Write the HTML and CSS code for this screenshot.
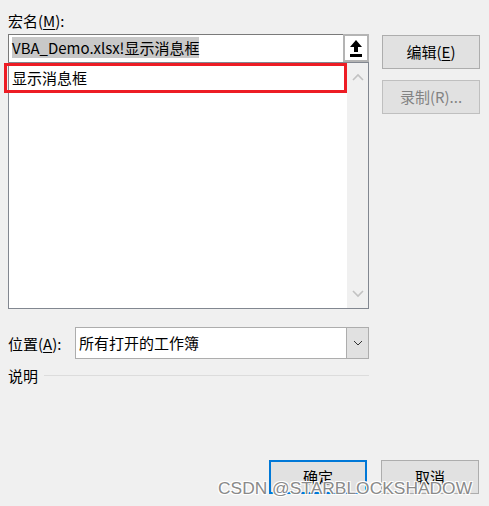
FILE: index.html
```html
<!DOCTYPE html>
<html lang="zh-CN">
<head>
<meta charset="utf-8">
<title>宏</title>
<link rel="stylesheet" href="styles.css">
</head>
<body>
<div class="dialog">
  <div class="top">
    <div class="left">
      <div class="label-macro">宏名(<u>M</u>):</div>
      <div class="name-row">
        <div class="name-box"><span class="sel">VBA_Demo.xlsx!显示消息框</span></div>
        <div class="up-btn">
          <svg width="12" height="17" viewBox="0 0 12 17"><path d="M6 0 L12 7 L8 7 L8 12 L4 12 L4 7 L0 7 Z" fill="#000"/><rect x="0" y="14" width="12" height="3" fill="#000"/></svg>
        </div>
      </div>
      <div class="list">
        <div class="list-items">
          <div class="item">显示消息框</div>
          <div class="mark"></div>
        </div>
        <div class="scroll">
          <svg width="12" height="8" viewBox="0 0 12 8"><path d="M1 7 L6 2 L11 7" fill="none" stroke="#c2c2c2" stroke-width="1.6"/></svg>
          <svg width="12" height="8" viewBox="0 0 12 8"><path d="M1 1 L6 6 L11 1" fill="none" stroke="#c2c2c2" stroke-width="1.6"/></svg>
        </div>
      </div>
    </div>
    <div class="right">
      <div class="btn">编辑(<u>E</u>)</div>
      <div class="btn disabled">录制(R)...</div>
    </div>
  </div>
  <div class="loc-row">
    <div class="loc-label">位置(<u>A</u>):</div>
    <div class="combo">
      <div class="combo-text">所有打开的工作簿</div>
      <div class="combo-btn">
        <svg width="10" height="6" viewBox="0 0 10 6"><path d="M1 1 L5 5 L9 1" fill="none" stroke="#333" stroke-width="1"/></svg>
      </div>
    </div>
  </div>
  <div class="desc-row">
    <span class="desc-label">说明</span>
    <span class="desc-line"></span>
  </div>
  <div class="bottom">
    <div class="btn primary">确定</div>
    <div class="btn">取消</div>
  </div>
  <div class="watermark">CSDN @STARBLOCKSHADOW</div>
</div>
</body>
</html>
```
FILE: styles.css
```css
html, body {
  margin: 0;
  padding: 0;
  background: #f0f0f0;
}
body {
  width: 489px;
  height: 506px;
  overflow: hidden;
  font-family: "Noto Sans CJK SC", "Noto Sans", sans-serif;
  font-size: 15px;
  color: #000;
}
u { text-decoration: underline; text-underline-offset: 2px; }
.dialog {
  position: relative;
  height: 506px;
  box-sizing: border-box;
  padding: 10px 0 0 8px;
}
.top {
  display: flex;
  gap: 13px;
}
.left {
  width: 361px;
  position: relative;
}
.label-macro {
  height: 24px;
  line-height: 22px;
}
.name-row {
  display: flex;
  height: 28px;
}
.name-box {
  flex: 1;
  box-sizing: border-box;
  border: 1px solid #7a7a7a;
  border-right: none;
  border-bottom: none;
  background: #fff;
  padding: 2px 0 0 3px;
  line-height: 20px;
}
.sel {
  background: #c8c8c8;
  display: inline-block;
  height: 21px;
  line-height: 21px;
}
.up-btn {
  width: 26px;
  box-sizing: border-box;
  border: 2px solid #b4b4b4;
  background: #fff;
  display: flex;
  align-items: center;
  justify-content: center;
}
.list {
  height: 247px;
  box-sizing: border-box;
  border: 1px solid #828790;
  background: #fff;
  display: flex;
}
.list-items {
  flex: 1;
  position: relative;
}
.item {
  padding: 5px 0 0 3px;
  line-height: 20px;
}
.mark {
  position: absolute;
  left: -5px;
  top: 0;
  width: 343px;
  height: 30px;
  box-sizing: border-box;
  border: 3px solid #ed1c24;
}
.scroll {
  width: 21px;
  background: #f0f0f0;
  display: flex;
  flex-direction: column;
  justify-content: space-between;
  align-items: center;
  padding: 10px 0 10px;
}
.right {
  padding-top: 25px;
  display: flex;
  flex-direction: column;
  gap: 11px;
}
.btn {
  width: 98px;
  height: 34px;
  box-sizing: border-box;
  border: 1px solid #adadad;
  background: #e1e1e1;
  display: flex;
  align-items: center;
  justify-content: center;
  line-height: 20px;
}
.btn.disabled {
  color: #838383;
  border-color: #bfbfbf;
}
.btn.primary {
  border: 2px solid #0078d7;
}
.loc-row {
  display: flex;
  align-items: center;
  margin-top: 18px;
  width: 361px;
  height: 32px;
}
.loc-label {
  width: 67px;
}
.combo {
  flex: 1;
  height: 32px;
  box-sizing: border-box;
  border: 1px solid #adadad;
  background: #fff;
  display: flex;
}
.combo-text {
  flex: 1;
  padding-left: 3px;
  line-height: 30px;
}
.combo-btn {
  width: 21px;
  background: #e1e1e1;
  border-left: 1px solid #adadad;
  display: flex;
  align-items: center;
  justify-content: center;
}
.desc-row {
  display: flex;
  align-items: center;
  gap: 6px;
  width: 361px;
  margin-top: 6px;
  height: 20px;
}
.desc-line {
  flex: 1;
  height: 1px;
  background: #dcdcdc;
}
.bottom {
  display: flex;
  justify-content: flex-end;
  gap: 14px;
  margin-top: 75px;
  padding-right: 10px;
}
.watermark {
  position: absolute;
  left: 218px;
  top: 478px;
  font-family: "Liberation Sans", Arial, sans-serif;
  font-size: 17.4px;
  color: #8a8a8a;
  text-shadow: 1px 1px 0 #fff, -1px -1px 0 #fff, 1px -1px 0 #fff, -1px 1px 0 #fff;
  white-space: nowrap;
}
```
